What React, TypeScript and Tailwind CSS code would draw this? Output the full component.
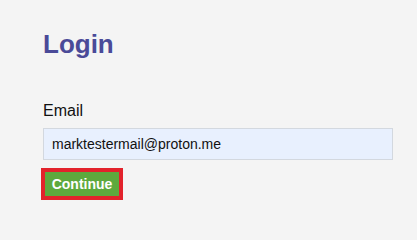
export default function App() {
  return (
    <div className="min-h-screen bg-[#f4f4f4] font-['Liberation_Sans',Arial,sans-serif]">
      <div className="pl-[43px] pr-[24px] pt-[29px]">
        <h1 className="text-[26px] leading-[30px] font-bold text-[#4a4a98]">Login</h1>

        <form className="mt-[43px] flex flex-col" onSubmit={(e) => e.preventDefault()}>
          <label htmlFor="email" className="text-[16px] leading-[18px] text-[#111]">
            Email
          </label>
          <input
            id="email"
            type="email"
            defaultValue="marktestermail@proton.me"
            className="mt-[8px] h-[32px] w-[350px] border border-[#d3d8df] bg-[#e8f0fe] px-[8px] text-[14px] text-[#111] outline-none"
          />
          <div className="mt-[8px] -ml-[2px] self-start border-4 border-[#e2222b]">
            <button
              type="submit"
              className="flex h-[24px] w-[74px] items-center justify-center bg-[#5da93d] text-[14px] font-bold text-white"
            >
              Continue
            </button>
          </div>
        </form>
      </div>
    </div>
  );
}
